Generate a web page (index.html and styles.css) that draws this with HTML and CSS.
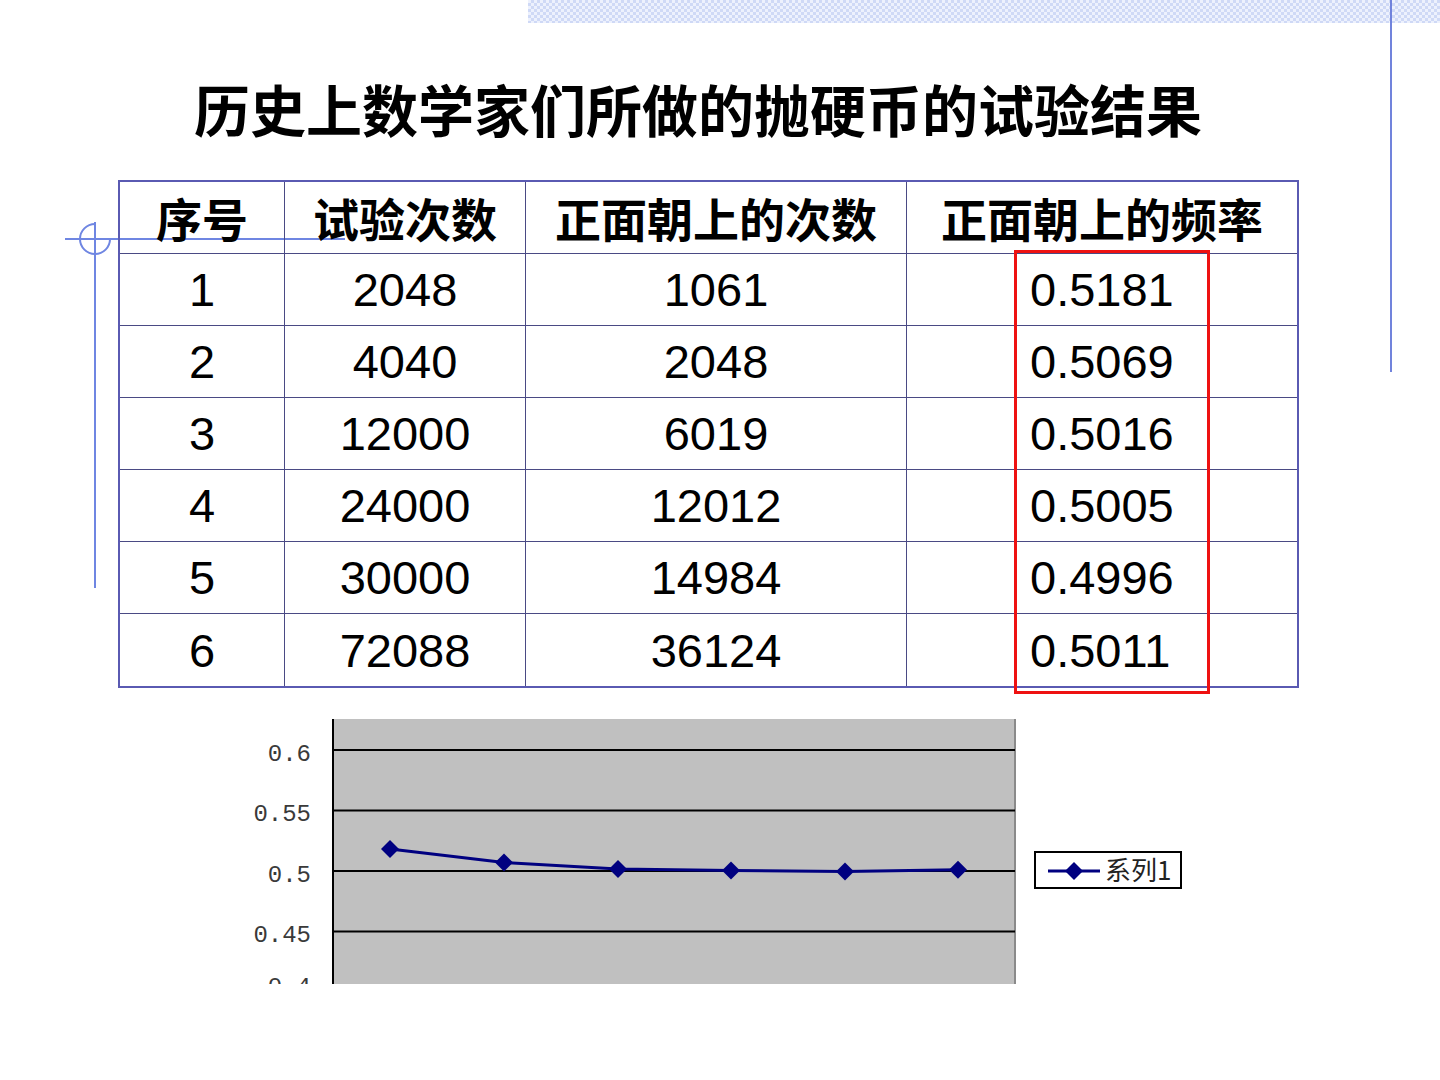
FILE: index.html
```html
<!DOCTYPE html>
<html lang="zh-CN">
<head>
<meta charset="utf-8">
<title>抛硬币的试验结果</title>
<link rel="stylesheet" href="styles.css">
</head>
<body>
<div class="slide">
  <div class="band"></div>
  <div class="vline-right"></div>
  <svg class="crosshair" width="300" height="380" viewBox="0 0 300 380">
    <line x1="5" y1="29" x2="285" y2="29" />
    <line x1="35" y1="12" x2="35" y2="378" />
    <path d="M35 14 A15 15 0 1 0 50 29" fill="none" />
  </svg>

  <h1 class="title">历史上数学家们所做的抛硬币的试验结果</h1>

  <div class="table-wrap">
    <table class="results">
      <thead>
        <tr><th class="c1">序号</th><th class="c2">试验次数</th><th class="c3">正面朝上的次数</th><th class="c4">正面朝上的频率</th></tr>
      </thead>
      <tbody>
        <tr><td>1</td><td>2048</td><td>1061</td><td class="freq">0.5181</td></tr>
        <tr><td>2</td><td>4040</td><td>2048</td><td class="freq">0.5069</td></tr>
        <tr><td>3</td><td>12000</td><td>6019</td><td class="freq">0.5016</td></tr>
        <tr><td>4</td><td>24000</td><td>12012</td><td class="freq">0.5005</td></tr>
        <tr><td>5</td><td>30000</td><td>14984</td><td class="freq">0.4996</td></tr>
        <tr><td>6</td><td>72088</td><td>36124</td><td class="freq">0.5011</td></tr>
      </tbody>
    </table>
    <div class="highlight"></div>
  </div>

  <svg class="chart" width="1440" height="265" viewBox="0 718 1440 265">
    <rect x="333" y="718" width="682" height="270" fill="#c0c0c0" />
    <line x1="1015" y1="718" x2="1015" y2="990" stroke="#8a8a8a" stroke-width="2" />
    <g stroke="#000" stroke-width="2">
      <line x1="333" y1="749" x2="1015" y2="749" />
      <line x1="333" y1="809.5" x2="1015" y2="809.5" />
      <line x1="333" y1="870" x2="1015" y2="870" />
      <line x1="333" y1="930.5" x2="1015" y2="930.5" />
      <line x1="333" y1="718" x2="333" y2="990" />
    </g>
    <g class="ylabels">
      <text x="311" y="760">0.6</text>
      <text x="311" y="820">0.55</text>
      <text x="311" y="881">0.5</text>
      <text x="311" y="941">0.45</text>
      <text x="311" y="993">0.4</text>
    </g>
    <polyline points="390,848 504,861.6 618,868 731,869.4 845,870.5 958,868.7" fill="none" stroke="#000080" stroke-width="3" />
    <g fill="#000080">
      <path d="M390 839 L399 848 L390 857 L381 848 Z" />
      <path d="M504 852.6 L513 861.6 L504 870.6 L495 861.6 Z" />
      <path d="M618 859 L627 868 L618 877 L609 868 Z" />
      <path d="M731 860.4 L740 869.4 L731 878.4 L722 869.4 Z" />
      <path d="M845 861.5 L854 870.5 L845 879.5 L836 870.5 Z" />
      <path d="M958 859.7 L967 868.7 L958 877.7 L949 868.7 Z" />
    </g>
    <rect x="1035" y="851" width="146" height="36" fill="#fff" stroke="#000" stroke-width="2" />
    <line x1="1048" y1="870" x2="1100" y2="870" stroke="#000080" stroke-width="3" />
    <path d="M1074 861 L1083 870 L1074 879 L1065 870 Z" fill="#000080" />
    <text class="legend" x="1105" y="879">系列1</text>
  </svg>
</div>
</body>
</html>
```

FILE: styles.css
```css
html, body {
  margin: 0;
  padding: 0;
  background: #fff;
}

.slide {
  position: relative;
  width: 1440px;
  height: 1080px;
  overflow: hidden;
  background: #fff;
  display: flex;
  flex-direction: column;
}

.band {
  position: absolute;
  left: 528px;
  top: 0;
  width: 912px;
  height: 23px;
  background-color: #edf1fd;
  background-image:
    linear-gradient(45deg, #cfd9f6 25%, transparent 25%, transparent 75%, #cfd9f6 75%),
    linear-gradient(45deg, #cfd9f6 25%, transparent 25%, transparent 75%, #cfd9f6 75%);
  background-size: 6px 6px;
  background-position: 0 0, 3px 3px;
}

.vline-right {
  position: absolute;
  left: 1390px;
  top: 0;
  width: 2px;
  height: 372px;
  background: #7183dc;
}

.crosshair {
  position: absolute;
  left: 60px;
  top: 210px;
  overflow: visible;
}

.crosshair line,
.crosshair path {
  stroke: #6f86e2;
  stroke-width: 2;
}

.title {
  margin: 72px 0 0 0;
  height: 72px;
  line-height: 72px;
  text-align: center;
  font-family: "Noto Sans CJK SC", sans-serif;
  font-weight: 700;
  font-size: 56px;
  color: #000;
  padding-right: 44px;
  white-space: nowrap;
}

.table-wrap {
  position: relative;
  margin: 36px 0 0 118px;
  width: 1181px;
}

.results {
  width: 1181px;
  border-collapse: collapse;
  table-layout: fixed;
  border: 2px solid #5a5ab2;
}

.results th,
.results td {
  border: 1px solid #4a4a84;
  padding: 0;
  text-align: center;
  color: #000;
}

.results th {
  height: 70.5px;
  font-family: "Noto Sans CJK SC", sans-serif;
  font-weight: 700;
  font-size: 46px;
  line-height: 1;
}

.results td {
  height: 71.2px;
  font-family: "Liberation Sans", Arial, sans-serif;
  font-size: 47px;
  line-height: 1;
}

.results .c1 { width: 164px; }
.results .c2 { width: 240px; }
.results .c3 { width: 380px; }
.results .c4 { width: auto; }

.results td.freq {
  text-align: left;
  padding-left: 123px;
}

.highlight {
  position: absolute;
  left: 896px;
  top: 70px;
  width: 190px;
  height: 438px;
  border: 3px solid #ee1111;
  pointer-events: none;
}

.chart {
  display: block;
  margin-top: 31px;
}

.ylabels text {
  font-family: "Liberation Mono", "DejaVu Sans Mono", monospace;
  font-size: 24px;
  fill: #3a3a3a;
  text-anchor: end;
}

.legend {
  font-family: "Noto Sans CJK SC", sans-serif;
  font-size: 26px;
  fill: #222;
}
```
